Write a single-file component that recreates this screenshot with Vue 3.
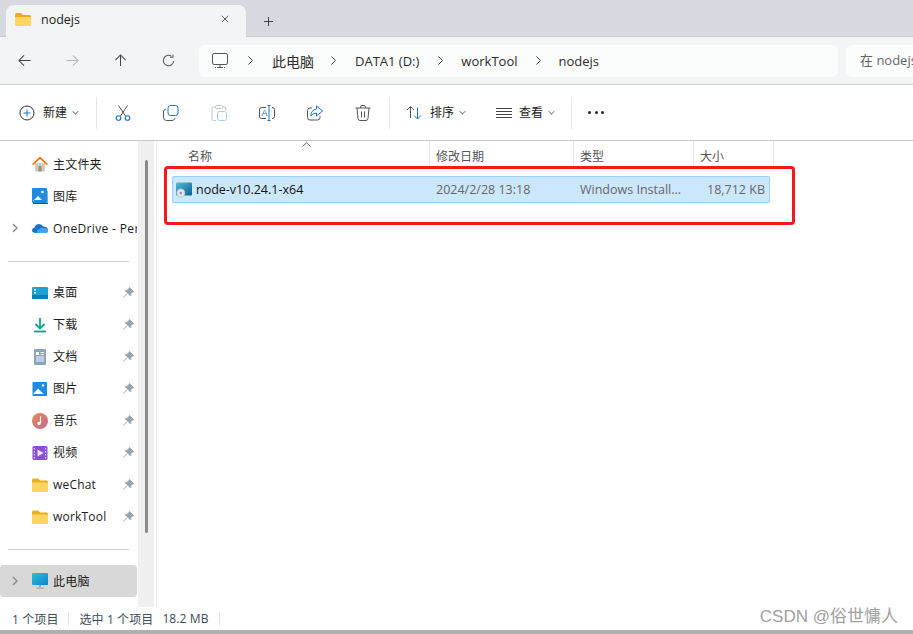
<script setup>
const quick = [
  { label: '桌面', icon: 'desk' },
  { label: '下载', icon: 'down' },
  { label: '文档', icon: 'doc' },
  { label: '图片', icon: 'pic' },
  { label: '音乐', icon: 'music' },
  { label: '视频', icon: 'video' },
  { label: 'weChat', icon: 'folder' },
  { label: 'workTool', icon: 'folder' },
]
</script>

<template>
  <div class="win">
    <header class="tabstrip">
      <div class="tab">
        <svg class="ic16" viewBox="0 0 16 16"><path d="M0 3.500Q0 2 1.500 2H6l2 2h6.500Q16 4 16 5.500V6H0z" fill="#eeab1f"/><path d="M0 6h16v7.500q0 1.500-1.500 1.500h-13Q0 15 0 13.500z" fill="#fdd662"/></svg>
        <span class="tabtitle">nodejs</span>
        <svg class="ic10" viewBox="0 0 10 10"><path d="M1 1l8 8M9 1l-8 8" stroke="#333" fill="none"/></svg>
      </div>
      <svg class="plus" viewBox="0 0 10 10"><path d="M5 0v10M0 5h10" stroke="#333" fill="none"/></svg>
    </header>

    <nav class="navbar">
      <svg class="nav-ic" viewBox="0 0 14 14"><path d="M13.500 7H1M6.500 1.500L1 7l5.500 5.500" fill="none" stroke="#444" stroke-width="1.100"/></svg>
      <svg class="nav-ic" viewBox="0 0 14 14"><path d="M.5 7H13M7.500 1.500L13 7l-5.500 5.500" fill="none" stroke="#b5b5b5" stroke-width="1.100"/></svg>
      <svg class="nav-ic" viewBox="0 0 14 14"><path d="M7 13V1M1.500 6.500L7 1l5.500 5.500" fill="none" stroke="#444" stroke-width="1.100"/></svg>
      <svg class="nav-ic" viewBox="0 0 14 14"><path d="M12.600 7.500A5.600 5.600 0 1 1 10 2.300M11.800 .6v3h-3" fill="none" stroke="#555" stroke-width="1.100"/></svg>
      <div class="crumbs">
        <svg class="pc-outline" viewBox="0 0 16 16"><rect x=".5" y=".5" width="15" height="11" rx="1.500" fill="none" stroke="#555"/><path d="M5 14.500h6M8 12v2M3 14.500h1M12 14.500h1" stroke="#555" fill="none"/></svg>
        <svg class="sep s1" viewBox="0 0 5 9"><path d="M.5 .5l4 4-4 4" fill="none" stroke="#444"/></svg>
        <span class="crumb c1">此电脑</span>
        <svg class="sep s2" viewBox="0 0 5 9"><path d="M.5 .5l4 4-4 4" fill="none" stroke="#444"/></svg>
        <span class="crumb c2">DATA1 (D:)</span>
        <svg class="sep s3" viewBox="0 0 5 9"><path d="M.5 .5l4 4-4 4" fill="none" stroke="#444"/></svg>
        <span class="crumb c3">workTool</span>
        <svg class="sep s3" viewBox="0 0 5 9"><path d="M.5 .5l4 4-4 4" fill="none" stroke="#444"/></svg>
        <span class="crumb c4">nodejs</span>
      </div>
      <div class="search">在 nodejs 中搜索</div>
    </nav>

    <div class="toolbar">
      <button class="tool new">
        <svg class="ic16b" viewBox="0 0 16 16"><circle cx="8" cy="8" r="7" fill="none" stroke="#333"/><path d="M8 4.500v7M4.500 8h7" stroke="#1a73c8" fill="none"/></svg>
        <span class="tooltext">新建</span><i class="chev"></i>
      </button>
      <span class="vsep first"></span>
      <svg class="t-ic" viewBox="0 0 16 16"><path d="M3.500 .5L10.500 11M12.500 .5L5.500 11" stroke="#555" fill="none"/><circle cx="3.500" cy="13" r="2.300" fill="none" stroke="#1a73c8" stroke-width="1.100"/><circle cx="12.500" cy="13" r="2.300" fill="none" stroke="#1a73c8" stroke-width="1.100"/></svg>
      <svg class="t-ic" viewBox="0 0 16 16"><rect x="5" y=".5" width="10" height="10" rx="2.500" fill="none" stroke="#1a73c8"/><path d="M3 4Q.5 4.500 .5 7v5.500q0 3 3 3H9q2.500 0 3-2.500" fill="none" stroke="#555"/></svg>
      <svg class="t-ic" viewBox="0 0 16 16"><path d="M5 2H2.500Q1 2 1 3.500v10.500Q1 15.500 2.500 15.500H5M11 2h2q1.500 0 1.500 1v2" fill="none" stroke="#c4c4c4"/><rect x="4.500" y=".5" width="7" height="3" rx="1" fill="none" stroke="#c4c4c4"/><rect x="6.500" y="6.500" width="9" height="9" rx="2" fill="none" stroke="#a9cdec"/></svg>
      <svg class="t-ic" viewBox="0 0 16 16"><path d="M7 2.500H2.500Q.5 2.500.5 4.500v7q0 2 2 2H7M13 2.500q2.500 0 2.500 2v7q0 2-2.500 2" fill="none" stroke="#555"/><path d="M10 .5v15M8.500.5h3M8.500 15.500h3" stroke="#1a73c8" fill="none"/><text x="2.500" y="11" class="tiny">A</text></svg>
      <svg class="t-ic" viewBox="0 0 16 16"><path d="M5 3H3Q.5 3 .5 5.500v7Q.5 15 3 15h7.500Q13 15 13 12.500V11" fill="none" stroke="#555"/><path d="M9.500 1l6 5-6 5V8Q6 8 3.800 11 4 5 9.500 4z" fill="none" stroke="#1a73c8"/></svg>
      <svg class="t-ic" viewBox="0 0 16 16"><path d="M.5 3h15M5.500 3V2q0-1.500 1.500-1.500h2q1.500 0 1.500 1.500v1M2 3l1 10.500q.2 2 2 2h6q1.800 0 2-2L14 3M6.500 6.500v6M9.500 6.500v6" fill="none" stroke="#555"/></svg>
      <span class="vsep second"></span>
      <button class="tool sort">
        <svg class="ic16b" viewBox="0 0 16 16"><path d="M4.500 13V1.500M1 5l3.500-3.500L8 5" fill="none" stroke="#555"/><path d="M11.500 2.500V14M8 10.500L11.500 14l3.500-3.500" fill="none" stroke="#1a73c8"/></svg>
        <span class="tooltext">排序</span><i class="chev"></i>
      </button>
      <button class="tool view">
        <svg class="ic16b" viewBox="0 0 16 16"><path d="M0 3.500h16M0 6.500h16M0 9.500h16M0 12.500h16" stroke="#444" fill="none"/></svg>
        <span class="tooltext">查看</span><i class="chev"></i>
      </button>
      <span class="vsep third"></span>
      <span class="more"><b></b><b></b><b></b></span>
    </div>

    <main class="body">
      <aside class="sidebar">
        <div class="tree">
          <div class="item">
            <span class="arrow"></span>
            <svg class="ic16" viewBox="0 0 16 16"><path d="M3 7v7.500q0 1 1 1h8q1 0 1-1V7z" fill="#d5c9ba"/><rect x="6.500" y="10" width="3" height="5.500" fill="#9b8e80"/><path d="M0 8L8 .5 16 8l-1 1.200L8 3 1 9.200z" fill="#e8791b"/></svg>
            <span class="lbl">主文件夹</span>
          </div>
          <div class="item">
            <span class="arrow"></span>
            <svg class="ic16" viewBox="0 0 16 16"><rect width="15" height="15" rx="1" fill="#1f8ae0"/><path d="M1 13l5-5 4 4H1z" fill="#fff"/><circle cx="10.500" cy="4" r="1.300" fill="#fff"/><path d="M1 15.500h15V3" stroke="#0c5aa0" fill="none"/></svg>
            <span class="lbl">图库</span>
          </div>
          <div class="item">
            <span class="arrow"><svg class="chevron" viewBox="0 0 6 10"><path d="M1 1l4 4-4 4" fill="none" stroke="#888" stroke-width="1.400"/></svg></span>
            <svg class="ic16" viewBox="0 0 16 16"><path d="M4 13Q0 13 0 10.300 0 8 2.500 7.500 3.500 4 7 4q3 0 4 2.500 4-.3 5 3.300 0 3.200-3 3.200z" fill="#1a73c8"/><path d="M5 13q-1-3 2-3.500 1.500-2.500 4.500-1.500 4.500 0 4.500 2.500 0 2.500-3 2.500z" fill="#4aa3e8"/></svg>
            <span class="lbl clip">OneDrive - Personal</span>
          </div>
        </div>
        <hr class="divider" />
        <div class="tree quick">
          <div v-for="q in quick" :key="q.label" class="item">
            <span class="arrow"></span>
            <svg v-if="q.icon === 'desk'" class="ic16" viewBox="0 0 16 16"><rect y="2" width="16" height="12" rx="1" fill="#1ba3d6"/><rect y="10" width="16" height="4" fill="#0f7ea8"/><path d="M2 4h2v1.500H2zM2 7h2v1.500H2z" fill="#fff"/></svg>
            <svg v-else-if="q.icon === 'down'" class="ic16" viewBox="0 0 16 16"><path d="M8 1v10M3.500 7L8 11.500 12.500 7" stroke="#12a18c" stroke-width="1.800" fill="none"/><path d="M2 14.500h12" stroke="#12a18c" stroke-width="1.800"/></svg>
            <svg v-else-if="q.icon === 'doc'" class="ic16" viewBox="0 0 16 16"><rect x="2" y="0" width="12" height="16" rx="1" fill="#8ba4c0"/><path d="M4 3h3v3H4z" fill="#fff"/><path d="M8.500 3.500H12M8.500 5.500H12M4 8h8M4 10h8M4 12h8" stroke="#fff" stroke-width=".9"/></svg>
            <svg v-else-if="q.icon === 'pic'" class="ic16" viewBox="0 0 16 16"><rect x=".5" y="1" width="14.500" height="14" rx="1" fill="#1f8ae0"/><path d="M1 13l5-5.500L11.500 13z" fill="#fff"/><circle cx="11" cy="4.500" r="1.200" fill="#fff"/></svg>
            <svg v-else-if="q.icon === 'music'" class="ic16" viewBox="0 0 16 16"><defs><linearGradient id="mg" x1="0" y1="0" x2="1" y2="1"><stop offset="0" stop-color="#ee8a4a"/><stop offset="1" stop-color="#bd6a9c"/></linearGradient></defs><circle cx="8" cy="8" r="8" fill="url(#mg)"/><path d="M8.500 3.500v6.500" stroke="#fff" stroke-width="1.200"/><circle cx="7" cy="10.500" r="1.700" fill="#fff"/></svg>
            <svg v-else-if="q.icon === 'video'" class="ic16" viewBox="0 0 16 16"><rect x=".5" y="1" width="15" height="14" rx="1.500" fill="#8c4fd8"/><path d="M5.500 4.500l6 3.500-6 3.500z" fill="#f2e7fb"/><path d="M1.800 3h1.200v1.400H1.800zM1.800 6h1.200v1.400H1.800zM1.800 9h1.200v1.400H1.800zM1.800 12h1.200v1.400H1.800zM13 3h1.200v1.400H13zM13 6h1.200v1.400H13zM13 9h1.200v1.400H13zM13 12h1.200v1.400H13z" fill="#dcc7f5"/></svg>
            <svg v-else class="ic16" viewBox="0 0 16 16"><path d="M0 3Q0 1.500 1.500 1.500H6L8 3.500h6.500Q16 3.500 16 5v1H0z" fill="#eeab1f"/><path d="M0 5.500h16v8q0 1.500-1.500 1.500h-13Q0 15 0 13.500z" fill="#fdd662"/></svg>
            <span class="lbl">{{ q.label }}</span>
            <svg class="pin" viewBox="0 0 12 12"><path d="M7 .5L11.500 5 10 5.800 8.800 7l-.6 2.800L2.200 3.800 5 3.200 6.200 2zM4 7.500L.7 11.300" fill="#9aa3ab" stroke="#9aa3ab"/></svg>
          </div>
        </div>
        <hr class="divider lower" />
        <div class="item active">
          <span class="arrow"><svg class="chevron" viewBox="0 0 6 10"><path d="M1 1l4 4-4 4" fill="none" stroke="#888" stroke-width="1.400"/></svg></span>
          <svg class="ic16" viewBox="0 0 16 16"><defs><linearGradient id="pcg" x1="0" y1="0" x2="1" y2="1"><stop offset="0" stop-color="#27c0d8"/><stop offset="1" stop-color="#1580c8"/></linearGradient></defs><rect width="16" height="12" rx="1" fill="url(#pcg)"/><path d="M7 12h2v2.500H7zM4.500 14.500h7V16h-7z" fill="#9db4c0"/></svg>
          <span class="lbl">此电脑</span>
        </div>
      </aside>
      <div class="scroll"><div class="thumb"></div></div>
      <section class="files">
        <div class="heads">
          <div class="h name">名称</div>
          <div class="h date">修改日期</div>
          <div class="h type">类型</div>
          <div class="h size">大小</div>
          <svg class="sortmark" viewBox="0 0 9 5"><path d="M.5 4.500L4.500 .8l4 3.700" fill="none" stroke="#666"/></svg>
        </div>
        <div class="row">
          <span class="fname">
            <svg class="ic16" viewBox="0 0 16 16"><defs><linearGradient id="fg" x1="0" y1="0" x2="1" y2="1"><stop offset="0" stop-color="#4ec0dc"/><stop offset="1" stop-color="#0f5f92"/></linearGradient></defs><rect width="16" height="13" rx="1" fill="url(#fg)" y="0.500"/><circle cx="4.800" cy="11" r="4.200" fill="#dfe6ec" stroke="#9fb0bf" stroke-width=".5"/><circle cx="4.800" cy="11" r="1.200" fill="#7d93a8"/></svg>
            <span>node-v10.24.1-x64</span>
          </span>
          <span class="fdate">2024/2/28 13:18</span>
          <span class="ftype">Windows Install...</span>
          <span class="fsize">18,712 KB</span>
        </div>
        <div class="redbox"></div>
      </section>
    </main>

    <footer class="status">
      <span>1 个项目</span><i></i><span>选中 1 个项目</span><span class="bytes">18.2 MB</span><i></i>
      <div class="watermark">CSDN @俗世慵人</div>
    </footer>
    <div class="edge"></div>
  </div>
</template>

<style>
html, body { margin: 0; overflow: hidden; background: #fff; }
</style>

<style scoped>
.win {
  width: 913px; height: 634px; display: flex; flex-direction: column; overflow: hidden;
  font-family: "Open Sans", "Noto Sans CJK SC", sans-serif; font-size: 12.5px; color: #1b1b1b;
  background: #fff;
}
svg { flex: none; display: block; }
button { all: unset; display: flex; align-items: center; }

.tabstrip { height: 37px; flex: none; background: #d6d9df; display: flex; align-items: flex-end; box-sizing: border-box; padding-left: 6px; border-bottom: 1px solid #c9cbcf; }
.tab { width: 240px; height: 32px; box-sizing: border-box; background: #f3f4f6; border-radius: 8px 8px 0 0; display: flex; align-items: center; padding: 0 0 4px 9px; margin-bottom: -1px; }
.tabtitle { margin-left: 10px; flex: 1; font-size: 12.5px; }
.ic10 { width: 8px; height: 8px; margin-right: 17px; }
.plus { width: 9px; height: 9px; margin: 0 0 10px 18px; }
.ic16 { width: 16px; height: 16px; }

.navbar { height: 48px; flex: none; box-sizing: border-box; background: #f3f4f6; border-bottom: 1px solid #d2d3d5; display: flex; align-items: center; padding: 0 0 0 18px; }
.nav-ic { width: 13px; height: 13px; margin-right: 35px; }
.crumbs { margin-left: -11px; width: 639px; height: 32px; box-sizing: border-box; background: #fbfcfc; border-radius: 6px; display: flex; align-items: center; padding-left: 13px; font-size: 13px; color: #2b2b2b; }
.pc-outline { width: 16px; height: 16px; }
.sep { width: 5px; height: 9px; }
.s1 { margin-left: 20px; }
.s2 { margin-left: 17px; }
.s3 { margin-left: 19px; }
.crumb { white-space: nowrap; }
.c1 { margin-left: 19px; font-size: 14px; }
.c2 { margin-left: 19px; }
.c3 { margin-left: 18px; }
.c4 { margin-left: 17px; }
.search { margin-left: 8px; flex: 1; height: 32px; background: #fbfcfc; border-radius: 6px 0 0 6px; padding-left: 14px; line-height: 31px; color: #666; white-space: nowrap; overflow: hidden; font-size: 13px; }

.toolbar { height: 56px; flex: none; box-sizing: border-box; display: flex; align-items: center; padding-left: 19px; border-bottom: 1px solid #c8c8c8; }
.ic16b { width: 16px; height: 16px; margin-right: 8px; }
.tool { font-size: 12px; }
.tooltext { padding-bottom: 2px; }
.chev { width: 4px; height: 4px; border-right: 1px solid #888; border-bottom: 1px solid #888; transform: rotate(45deg) scale(.9); margin: -3px 0 0 6px; }
.vsep { width: 1px; height: 32px; background: #e6e6e6; }
.first { margin: 0 18px 0 18px; }
.t-ic { width: 16px; height: 16px; margin-right: 32px; }
.second { margin: 0 16px 0 -14px; }
.sort { margin-right: 31px; }
.view { margin-right: 8px; }
.view .ic16b { margin-right: 7px; }
.third { margin: 0 16px 0 9px; }
.more { display: flex; gap: 3.5px; }
.more b { width: 3px; height: 3px; border-radius: 50%; background: #222; }
.tiny { font: 9px "Liberation Sans", sans-serif; fill: #1a73c8; }

.body { flex: 1; min-height: 0; display: flex; }
.sidebar { width: 138px; flex: none; overflow: hidden; padding-top: 7px; box-sizing: border-box; }
.item { height: 32px; display: flex; align-items: center; white-space: nowrap; position: relative; box-sizing: border-box; padding-left: 9px; width: 137px; }
.arrow { width: 23px; height: 10px; padding-left: 3px; box-sizing: border-box; }
.chevron { width: 6px; height: 10px; }
.lbl { margin-left: 5px; font-size: 12px; letter-spacing: .2px; }
.quick .lbl { padding-bottom: 2px; }
.clip { overflow: hidden; flex: 1; letter-spacing: .35px; }
.pin { position: absolute; left: 123px; top: 10px; width: 11px; height: 11px; }
.divider { border: 0; height: 1px; background: #d5d5d5; margin: 17px 9px 15px 8px; width: 121px; }
.lower { margin: 16px 0 15px 8px; }
.active { background: #d8d8d8; border-radius: 4px; }
.scroll { width: 16px; flex: none; background: #f0f0f0; position: relative; }
.thumb { width: 3px; height: 373px; margin: 19px 0 0 7px; background: #8b8b8b; border-radius: 2px; }

.files { flex: 1; position: relative; margin-left: 2px; border-left: 1px solid #eeeeee; padding-left: 15px; }
.heads { height: 28px; display: flex; position: relative; }
.h { box-sizing: border-box; padding: 6px 0 0 6px; border-right: 1px solid #e5e5e5; color: #555; font-size: 12px; }
.name { width: 258px; padding-left: 16px; }
.date { width: 144px; }
.type { width: 120px; }
.size { width: 80px; }
.sortmark { position: absolute; left: 130px; top: 1px; width: 9px; height: 5px; }
.row { margin-top: 7px; width: 598px; height: 27px; box-sizing: border-box; background: #cce8ff; border: 1px solid #99d1ff; border-radius: 2px; display: flex; align-items: center; font-size: 12.500px; white-space: nowrap; }
.fname { width: 263px; display: flex; align-items: center; gap: 4px; padding-left: 3px; box-sizing: border-box; color: #111; }
.fdate { width: 144px; color: #666; }
.ftype { width: 120px; color: #666; }
.fsize { width: 65px; color: #666; text-align: right; }
.redbox { position: absolute; left: 7px; top: 25px; width: 631px; height: 59px; box-sizing: border-box; border: 3px solid #f21b1b; border-radius: 4px; pointer-events: none; }

.status { height: 23px; flex: none; display: flex; align-items: center; padding-left: 12px; font-size: 12px; color: #3c4a58; position: relative; background: #fff; }
.status i { width: 1px; height: 14px; background: #e5e5e5; margin: 0 10px; }
.status span { letter-spacing: .1px; }
.bytes { margin-left: 9px; }
.watermark { position: absolute; right: 15px; top: -5px; font-family: "Liberation Sans", "Noto Sans CJK SC", sans-serif; font-size: 17px; color: #a0a0a0; white-space: nowrap; }
.edge { height: 4px; flex: none; background: #b0b0b0; }
</style>
